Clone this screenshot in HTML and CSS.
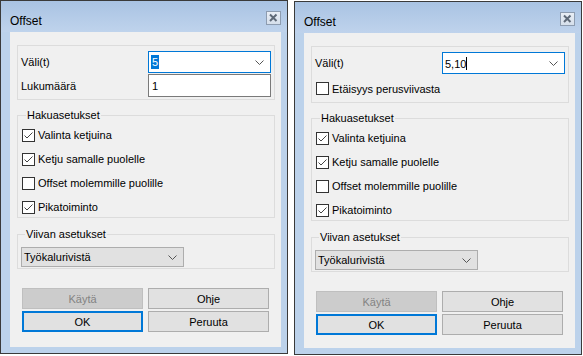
FILE: index.html
```html
<!DOCTYPE html>
<html lang="fi">
<head>
  <meta charset="UTF-8">
  <meta name="viewport" content="width=device-width, initial-scale=1.0">
  <title>Offset</title>
  <link rel="stylesheet" href="styles.css">
</head>
<body>
  <!-- dialog 1: count mode -->
  <div class="dialog">
    <div class="titlebar">
      <span class="title">Offset</span>
      <span class="close">
        <svg width="15" height="14" viewBox="0 0 15 14"><path d="M4 3.5 L10.5 10 M10.5 3.5 L4 10" stroke="#5f6a78" stroke-width="2"/></svg>
      </span>
    </div>
    <div class="client">
      <div class="group values">
        <span class="label">Väli(t)</span>
        <div class="combo"><span class="value"><span class="selected">5</span></span><svg class="chevron" width="9" height="5" viewBox="0 0 9 5"><polyline points="0.5,0.5 4.5,4.5 8.5,0.5" fill="none" stroke="#555"/></svg></div>
        <span class="label">Lukumäärä</span>
        <div class="textbox">1</div>
      </div>
      <fieldset class="options">
        <legend>Hakuasetukset</legend>
        <label class="check"><span class="box"><svg width="11" height="11" viewBox="0 0 11 11"><polyline points="1.5,5.5 4,8 9.5,2.5" fill="none" stroke="#444"/></svg></span>Valinta ketjuina</label>
        <label class="check"><span class="box"><svg width="11" height="11" viewBox="0 0 11 11"><polyline points="1.5,5.5 4,8 9.5,2.5" fill="none" stroke="#444"/></svg></span>Ketju samalle puolelle</label>
        <label class="check"><span class="box"></span>Offset molemmille puolille</label>
        <label class="check"><span class="box"><svg width="11" height="11" viewBox="0 0 11 11"><polyline points="1.5,5.5 4,8 9.5,2.5" fill="none" stroke="#444"/></svg></span>Pikatoiminto</label>
      </fieldset>
      <fieldset class="line">
        <legend>Viivan asetukset</legend>
        <div class="dropdown"><span>Työkalurivistä</span><svg class="chevron" width="9" height="5" viewBox="0 0 9 5"><polyline points="0.5,0.5 4.5,4.5 8.5,0.5" fill="none" stroke="#555"/></svg></div>
      </fieldset>
      <div class="buttons">
        <button class="btn" disabled>Käytä</button>
        <button class="btn">Ohje</button>
        <button class="btn default">OK</button>
        <button class="btn">Peruuta</button>
      </div>
    </div>
  </div>

  <!-- dialog 2: distance list mode -->
  <div class="dialog second">
    <div class="titlebar">
      <span class="title">Offset</span>
      <span class="close">
        <svg width="15" height="14" viewBox="0 0 15 14"><path d="M4 3.5 L10.5 10 M10.5 3.5 L4 10" stroke="#5f6a78" stroke-width="2"/></svg>
      </span>
    </div>
    <div class="client">
      <div class="group values">
        <span class="label">Väli(t)</span>
        <div class="combo"><span class="value">5,10<span class="caret"></span></span><svg class="chevron" width="9" height="5" viewBox="0 0 9 5"><polyline points="0.5,0.5 4.5,4.5 8.5,0.5" fill="none" stroke="#555"/></svg></div>
        <label class="check wide"><span class="box"></span>Etäisyys perusviivasta</label>
      </div>
      <fieldset class="options">
        <legend>Hakuasetukset</legend>
        <label class="check"><span class="box"><svg width="11" height="11" viewBox="0 0 11 11"><polyline points="1.5,5.5 4,8 9.5,2.5" fill="none" stroke="#444"/></svg></span>Valinta ketjuina</label>
        <label class="check"><span class="box"><svg width="11" height="11" viewBox="0 0 11 11"><polyline points="1.5,5.5 4,8 9.5,2.5" fill="none" stroke="#444"/></svg></span>Ketju samalle puolelle</label>
        <label class="check"><span class="box"></span>Offset molemmille puolille</label>
        <label class="check"><span class="box"><svg width="11" height="11" viewBox="0 0 11 11"><polyline points="1.5,5.5 4,8 9.5,2.5" fill="none" stroke="#444"/></svg></span>Pikatoiminto</label>
      </fieldset>
      <fieldset class="line">
        <legend>Viivan asetukset</legend>
        <div class="dropdown"><span>Työkalurivistä</span><svg class="chevron" width="9" height="5" viewBox="0 0 9 5"><polyline points="0.5,0.5 4.5,4.5 8.5,0.5" fill="none" stroke="#555"/></svg></div>
      </fieldset>
      <div class="buttons">
        <button class="btn" disabled>Käytä</button>
        <button class="btn">Ohje</button>
        <button class="btn default">OK</button>
        <button class="btn">Peruuta</button>
      </div>
    </div>
  </div>
</body>
</html>
```

FILE: styles.css
```css
body {
  font-family: "Liberation Sans", Arial, sans-serif;
  font-size: 11px;
  color: #000;
  margin: 0;
  padding: 0;
  display: flex;
  align-items: flex-start;
  gap: 6px;
  background-color: #fff;
}

.dialog {
  width: 288px;
  height: 354px;
  box-sizing: border-box;
  border: 1px solid #3a3a3a;
  background-color: #bcd2eb;
  display: flex;
  flex-direction: column;
}

.dialog.second {
  margin-top: 1px;
}

.titlebar {
  height: 31px;
  flex-shrink: 0;
  display: flex;
  justify-content: space-between;
  align-items: flex-start;
  padding: 10px 6px 0 9px;
  box-sizing: border-box;
  background: linear-gradient(#a9c3e3, #bfd3ec);
}

.title {
  font-size: 12px;
  line-height: 14px;
  margin-top: 3px;
}

.close {
  width: 15px;
  height: 14px;
  box-sizing: border-box;
  border: 1px solid #8d9cb0;
  background: linear-gradient(#e9eef5, #d5dfeb);
  display: flex;
}

.close svg {
  margin: -1px;
}

.client {
  flex: 1;
  margin: 0 6px 6px 9px;
  padding: 13px 6px 0 7px;
  background-color: #f0f0f0;
  display: flex;
  flex-direction: column;
}

.group {
  border: 1px solid #dcdcdc;
}

.values {
  display: grid;
  grid-template-columns: 1fr 123px;
  row-gap: 1px;
  padding: 5px 3px 2px 3px;
}

.label {
  align-self: center;
}

.combo,
.textbox {
  box-sizing: border-box;
  background-color: #fff;
  display: flex;
  align-items: center;
}

.combo {
  height: 22px;
  border: 1px solid #0078d7;
  justify-content: space-between;
  padding: 0 6px 0 2px;
}

.textbox {
  height: 23px;
  border: 1px solid #7a7a7a;
  padding-left: 3px;
}

.selected {
  background-color: #0078d7;
  color: #fff;
  padding: 1px 1px;
}

.caret {
  display: inline-block;
  width: 1px;
  height: 13px;
  background-color: #000;
  vertical-align: -2px;
}

fieldset {
  margin: 0;
  border: 1px solid #dcdcdc;
  min-width: 0;
}

legend {
  padding: 0 1px;
  margin-left: 4px;
  line-height: 13px;
}

.options {
  margin-top: 9px;
  padding: 5px 3px 2px 4px;
  display: flex;
  flex-direction: column;
  gap: 8px;
}

.check {
  display: flex;
  align-items: center;
  height: 16px;
}

.check.wide {
  grid-column: 1 / 3;
  height: 23px;
  padding-top: 2px;
  margin-left: 1px;
}

.box {
  width: 13px;
  height: 13px;
  box-sizing: border-box;
  border: 1px solid #333;
  background-color: #fff;
  margin-right: 3px;
  display: flex;
}

.line {
  margin-top: 10px;
  padding: 6px 3px 1px 3px;
}

.dropdown {
  width: 163px;
  height: 20px;
  box-sizing: border-box;
  border: 1px solid #adadad;
  background-color: #e1e1e1;
  display: flex;
  align-items: center;
  justify-content: space-between;
  padding: 0 6px 0 2px;
}

.buttons {
  margin: 19px 0 0 5px;
  display: grid;
  grid-template-columns: 121px 121px;
  column-gap: 5px;
  row-gap: 2px;
}

.btn {
  height: 21px;
  font-family: inherit;
  font-size: 11px;
  color: #000;
  background-color: #e1e1e1;
  border: 1px solid #adadad;
  padding: 0;
}

.btn:disabled {
  background-color: #cccccc;
  border-color: #bfbfbf;
  color: #838383;
}

.btn.default {
  border: 2px solid #0078d7;
}
```
